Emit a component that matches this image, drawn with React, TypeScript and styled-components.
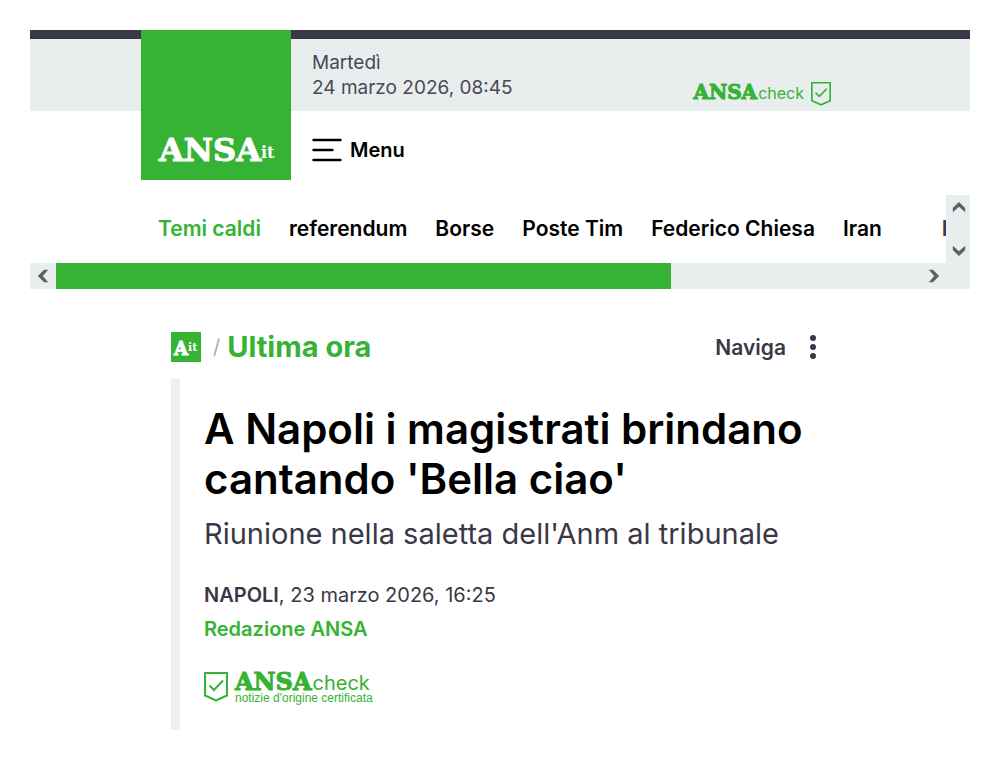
import React from 'react';
import styled, { createGlobalStyle } from 'styled-components';

const green = '#36b234';
const dark = '#3a3847';
const pale = '#e8eded';

const GlobalStyle = createGlobalStyle`
  * { box-sizing: border-box; }
  body {
    margin: 0;
    background: #fff;
    color: ${dark};
    font-family: Inter, "Liberation Sans", sans-serif;
  }
  h1, h2, p, ul { margin: 0; padding: 0; }
  a { color: inherit; text-decoration: none; }
  button { border: 0; padding: 0; background: none; color: inherit; font: inherit; cursor: pointer; }
  svg { display: block; flex: none; }
`;

const Page = styled.div`
  padding: 30px;
`;

const TopBar = styled.div`
  border-top: 9px solid ${dark};
  background: ${pale};
`;

const Wrap = styled.div`
  position: relative;
  max-width: 718px;
  margin: 0 auto;
  padding: 0 28px 0 171px;
  display: flex;
  justify-content: space-between;
`;

const Logo = styled.a`
  position: absolute;
  z-index: 1;
  top: -9px;
  left: 0;
  width: 150px;
  height: 150px;
  padding: 0 0 14px 18px;
  display: flex;
  align-items: flex-end;
  background: ${green};
  color: #fff;
`;

const Brand = styled.span<{ $size: number }>`
  font: bold ${p => p.$size}px/1 "DejaVu Serif", serif;
  -webkit-text-stroke: 1px currentColor;
`;

const BrandSuffix = styled.span<{ $size: number }>`
  padding-bottom: 5px;
  font: bold ${p => p.$size}px/1 "DejaVu Serif", serif;
`;

const DateText = styled.p`
  padding: 11px 0;
  font-size: 19px;
  line-height: 25px;
  color: #4a4856;
`;

const CheckLink = styled.a<{ $bottom?: number }>`
  display: inline-flex;
  align-items: flex-start;
  align-self: flex-end;
  gap: 7px;
  padding-bottom: ${p => p.$bottom || 0}px;
  color: ${green};
`;

const CheckLine = styled.span`
  display: flex;
  align-items: baseline;
  gap: 1px;
`;

const CheckWord = styled.span<{ $size: number }>`
  font-size: ${p => p.$size}px;
  line-height: 20px;
`;

const CheckStack = styled.span`
  display: flex;
  flex-direction: column;
  margin-top: -2px;
`;

const CheckNote = styled.span`
  font-family: "Liberation Sans", sans-serif;
  font-size: 12px;
  line-height: 8px;
`;

const MenuButton = styled.button`
  display: flex;
  align-items: center;
  gap: 8px;
  height: 84px;
  padding-bottom: 6px;
  color: #000;
  font-size: 20px;
  font-weight: 600;
`;

const Topics = styled.nav`
  display: grid;
  grid-template-columns: minmax(0, 1fr) 24px;
  grid-template-rows: 68px 26px;
`;

const TopicList = styled.ul`
  display: flex;
  align-items: center;
  gap: 28px;
  padding: 0 0 2px 128px;
  overflow: hidden;
  list-style: none;
  white-space: nowrap;
  font-size: 21px;
  font-weight: 600;
  color: #000;
`;

const Topic = styled.li<{ $tone?: string; $apart?: boolean }>`
  color: ${p => p.$tone || 'inherit'};
  margin-left: ${p => (p.$apart ? 32 : 0)}px;
`;

const VerticalBar = styled.div`
  display: flex;
  flex-direction: column;
  justify-content: space-between;
  background: ${pale};
`;

const HorizontalBar = styled.div`
  grid-column: 1 / -1;
  display: flex;
  padding-right: 24px;
  background: ${pale};
`;

const Track = styled.div`
  flex: 1;
`;

const Thumb = styled.div`
  width: 71%;
  height: 100%;
  background: ${green};
`;

const ScrollButton = styled.button<{ $width?: number; $height?: number }>`
  display: grid;
  place-items: center;
  width: ${p => p.$width || 26}px;
  height: ${p => p.$height || 26}px;
  color: #5d6161;
`;

const Article = styled.main`
  max-width: 658px;
  margin: 0 auto;
  padding-top: 43px;
`;

const SectionRow = styled.div`
  display: flex;
  align-items: center;
  justify-content: space-between;
  height: 30px;
  padding-right: 13px;
`;

const Crumbs = styled.div`
  display: flex;
  align-items: center;
`;

const Badge = styled.a`
  display: flex;
  align-items: flex-end;
  width: 30px;
  height: 30px;
  padding: 0 0 4px 3px;
  background: ${green};
  color: #fff;
`;

const Slash = styled.span`
  margin: 0 7px 0 12px;
  font-size: 20px;
  color: #aaa;
`;

const SectionTitle = styled.h2`
  font-size: 29px;
  line-height: 30px;
  font-weight: 700;
  color: ${green};
`;

const NavigaButton = styled.button`
  display: flex;
  align-items: center;
  gap: 24px;
  font-size: 21px;
  font-weight: 600;
`;

const Story = styled.article`
  margin-top: 17px;
  padding: 25px 0 24px 24px;
  border-left: 9px solid #efefef;
`;

const Headline = styled.h1`
  font-size: 42px;
  line-height: 50px;
  font-weight: 600;
  color: #000;
`;

const Summary = styled.p`
  margin-top: 11px;
  font-size: 29px;
  line-height: 38px;
`;

const Meta = styled.div`
  margin: 25px 0 26px;
  font-size: 20px;
  line-height: 34px;
`;

const Author = styled.a`
  display: block;
  color: ${green};
  font-weight: 600;
`;

const Place = styled.strong`
  font-weight: 600;
`;

const Chevron = ({ turn }: { turn: number }) => (
  <svg width="14" height="14" viewBox="0 0 14 14" fill="currentColor" aria-hidden="true">
    <path d="M.8 8L7 1.900 13.200 8v4.200L7 6.800.8 12.200z" transform={`rotate(${turn} 7 7)`} />
  </svg>
);

const Shield = ({ width, height }: { width: number; height: number }) => (
  <svg width={width} height={height} viewBox="0 0 24 30" preserveAspectRatio="none" fill="none" stroke="currentColor" strokeWidth="2" aria-hidden="true">
    <path d="M1 1h22v22.500L12 28.500 1 23.500z" />
    <path d="M5.500 13.500l4.500 4.500L19 8.500" />
  </svg>
);

export default function App() {
  return (
    <>
      <GlobalStyle />
      <Page>
        <header>
          <TopBar>
            <Wrap>
              <Logo href="#" aria-label="ANSA.it">
                <Brand $size={32}>ANSA</Brand>
                <BrandSuffix $size={16}>it</BrandSuffix>
              </Logo>
              <DateText>Martedì<br />24 marzo 2026, 08:45</DateText>
              <CheckLink href="#" $bottom={5}>
                <CheckLine>
                  <Brand $size={20}>ANSA</Brand>
                  <CheckWord $size={16}>check</CheckWord>
                </CheckLine>
                <Shield width={20} height={24} />
              </CheckLink>
            </Wrap>
          </TopBar>
          <Wrap>
            <MenuButton type="button">
              <svg width="30" height="24" viewBox="0 0 30 24" stroke="currentColor" strokeWidth="2.400" strokeLinecap="round" aria-hidden="true">
                <path d="M1.500 2h27M1.500 12h19M1.500 22h27" />
              </svg>
              Menu
            </MenuButton>
          </Wrap>
          <Topics aria-label="Temi caldi">
            <TopicList>
              <Topic $tone={green}>Temi caldi</Topic>
              <Topic><a href="#">referendum</a></Topic>
              <Topic><a href="#">Borse</a></Topic>
              <Topic><a href="#">Poste Tim</a></Topic>
              <Topic><a href="#">Federico Chiesa</a></Topic>
              <Topic><a href="#">Iran</a></Topic>
              <Topic $apart $tone={dark}>I</Topic>
            </TopicList>
            <VerticalBar>
              <ScrollButton type="button" $height={24} aria-label="Su"><Chevron turn={0} /></ScrollButton>
              <ScrollButton type="button" $height={24} aria-label="Giù"><Chevron turn={180} /></ScrollButton>
            </VerticalBar>
            <HorizontalBar>
              <ScrollButton type="button" aria-label="Indietro"><Chevron turn={270} /></ScrollButton>
              <Track><Thumb /></Track>
              <ScrollButton type="button" $width={24} aria-label="Avanti"><Chevron turn={90} /></ScrollButton>
            </HorizontalBar>
          </Topics>
        </header>
        <Article>
          <SectionRow>
            <Crumbs>
              <Badge href="#" aria-label="ANSA.it">
                <Brand $size={18}>A</Brand>
                <BrandSuffix $size={11}>it</BrandSuffix>
              </Badge>
              <Slash>/</Slash>
              <SectionTitle>Ultima ora</SectionTitle>
            </Crumbs>
            <NavigaButton type="button">
              Naviga
              <svg width="6" height="24" viewBox="0 0 6 24" fill="currentColor" aria-hidden="true">
                <circle cx="3" cy="3" r="3" /><circle cx="3" cy="12" r="3" /><circle cx="3" cy="21" r="3" />
              </svg>
            </NavigaButton>
          </SectionRow>
          <Story>
            <Headline>A Napoli i magistrati brindano cantando 'Bella ciao'</Headline>
            <Summary>Riunione nella saletta dell'Anm al tribunale</Summary>
            <Meta>
              <p><Place>NAPOLI</Place>, 23 marzo 2026, 16:25</p>
              <Author href="#">Redazione ANSA</Author>
            </Meta>
            <CheckLink href="#">
              <Shield width={24} height={30} />
              <CheckStack>
                <CheckLine>
                  <Brand $size={24}>ANSA</Brand>
                  <CheckWord $size={20}>check</CheckWord>
                </CheckLine>
                <CheckNote>notizie d'origine certificata</CheckNote>
              </CheckStack>
            </CheckLink>
          </Story>
        </Article>
      </Page>
    </>
  );
}
